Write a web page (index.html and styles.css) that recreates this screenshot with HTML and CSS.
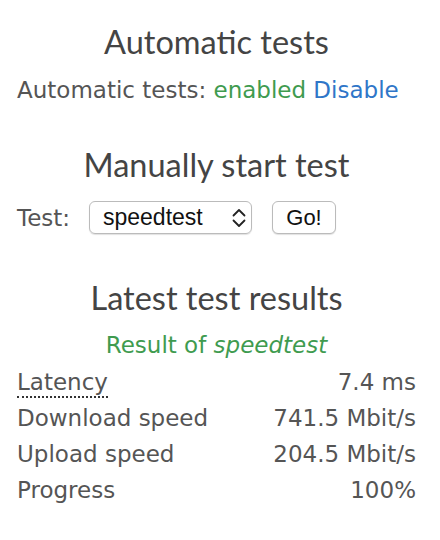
FILE: index.html
```html
<!DOCTYPE html>
<html>
<head>
<meta charset="utf-8">
<link rel="stylesheet" href="styles.css">
</head>
<body>
<div class="page">
  <h2 class="title">Automatic tests</h2>
  <p class="status">Automatic tests: <span class="ok">enabled</span> <a class="link" href="#">Disable</a></p>

  <h2 class="title">Manually start test</h2>
  <div class="form">
    <label class="label">Test:</label>
    <div class="select"><span>speedtest</span>
      <svg class="chev" width="16" height="20" viewBox="0 0 16 20"><path d="M2.5 7.5 L8 2 L13.5 7.5 M2.5 12.5 L8 18 L13.5 12.5" fill="none" stroke="#222" stroke-width="1.8" stroke-linecap="round" stroke-linejoin="round"/></svg>
    </div>
    <button class="go">Go!</button>
  </div>

  <h2 class="title">Latest test results</h2>
  <p class="result">Result of <em>speedtest</em></p>
  <div class="table">
    <div class="row"><span class="abbr">Latency</span><span>7.4 ms</span></div>
    <div class="row"><span>Download speed</span><span>741.5 Mbit/s</span></div>
    <div class="row"><span>Upload speed</span><span>204.5 Mbit/s</span></div>
    <div class="row"><span>Progress</span><span>100%</span></div>
  </div>
</div>
</body>
</html>
```

FILE: styles.css
```css
html, body { margin: 0; padding: 0; background: #fff; }
.page {
  padding: 22px 24px 0 17px;
  font-family: "DejaVu Sans", Verdana, sans-serif;
  color: #555;
  font-size: 23px;
}
.title {
  font-family: Lato, "Open Sans", sans-serif;
  font-weight: 400;
  font-size: 32.5px;
  color: #444;
  text-align: center;
  margin: 0;
  line-height: 40px;
}
.status { margin: 13px 0 40px; line-height: 30px; }
.ok { color: #3f9b4f; }
.link { color: #2f76c8; text-decoration: none; }
.form {
  display: flex;
  align-items: center;
  margin: 16px 0 44px;
}
.label { width: 72px; }
.select {
  width: 163px;
  height: 33px;
  box-sizing: border-box;
  border: 1px solid #bbb;
  border-radius: 6px;
  display: flex;
  align-items: center;
  justify-content: space-between;
  padding: 0 4px 0 13px;
  font-family: "Liberation Sans", Arial, sans-serif;
  font-size: 23px;
  color: #111;
  box-shadow: 0 1px 1px rgba(0,0,0,0.12);
}
.go {
  margin-left: 20px;
  width: 64px;
  height: 33px;
  border: 1px solid #bbb;
  border-radius: 6px;
  background: #fff;
  font-family: "Liberation Sans", Arial, sans-serif;
  font-size: 22px;
  color: #111;
  box-shadow: 0 1px 1px rgba(0,0,0,0.12);
  padding: 0;
}
.result {
  text-align: center;
  color: #3f9b4f;
  margin: 12px 0 4px;
  line-height: 30px;
}
.table { display: flex; flex-direction: column; }
.row {
  display: flex;
  justify-content: space-between;
  line-height: 36px;
}
.abbr {
  line-height: 28px;
  align-self: flex-start;
  margin-top: 4px;
  border-bottom: 2px dotted #333;
}
```
